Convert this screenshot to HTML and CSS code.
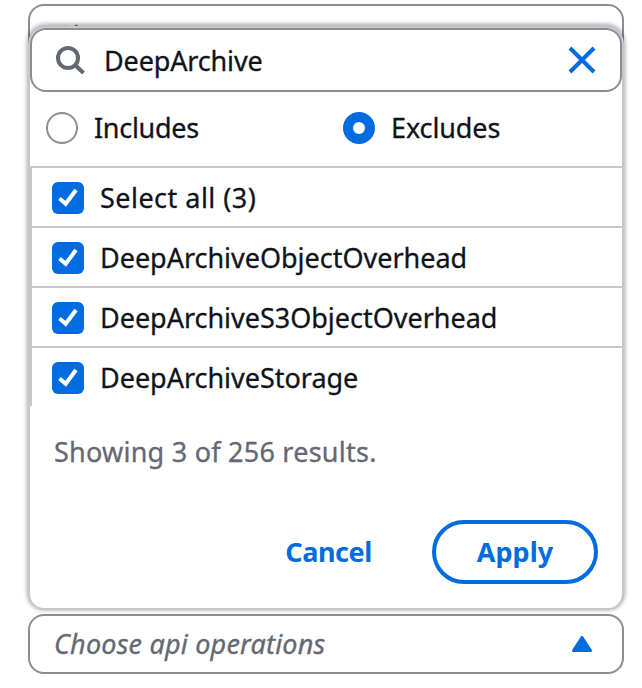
FILE: index.html
```html
<!DOCTYPE html>
<html lang="en">
<head>
<meta charset="utf-8">
<title>Usage type filter</title>
<link rel="stylesheet" href="styles.css">
</head>
<body>
<main class="filters">
  <section class="filter filter-open">
    <div class="field field-covered"><span class="placeholder">Choose usage types</span></div>
    <div class="dropdown">
      <div class="search">
        <svg class="search-icon" width="32" height="32" viewBox="0 0 32 32"><circle cx="14" cy="14" r="10" fill="none" stroke="#656871" stroke-width="4"/><path d="M21 21l8.5 8" stroke="#656871" stroke-width="4" fill="none"/></svg>
        <span class="query">DeepArchive</span>
        <svg class="clear-icon" width="32" height="32" viewBox="0 0 32 32"><path d="M4 4l24 24M28 4L4 28" stroke="#006ce0" stroke-width="4" fill="none"/></svg>
      </div>
      <div class="modes">
        <div class="mode"><span class="radio"></span><span class="includes">Includes</span></div>
        <div class="mode"><span class="radio radio-on"></span><span class="excludes">Excludes</span></div>
      </div>
      <div class="options">
        <div class="option"><span class="check"><svg width="32" height="32" viewBox="0 0 32 32"><path d="M7.5 16.5l6.2 5.3L24 8" stroke="#fff" stroke-width="4" fill="none"/></svg></span><span class="all">Select all (3)</span></div>
        <div class="option"><span class="check"><svg width="32" height="32" viewBox="0 0 32 32"><path d="M7.5 16.5l6.2 5.3L24 8" stroke="#fff" stroke-width="4" fill="none"/></svg></span><span>DeepArchiveObjectOverhead</span></div>
        <div class="option"><span class="check"><svg width="32" height="32" viewBox="0 0 32 32"><path d="M7.5 16.5l6.2 5.3L24 8" stroke="#fff" stroke-width="4" fill="none"/></svg></span><span>DeepArchiveS3ObjectOverhead</span></div>
        <div class="option"><span class="check"><svg width="32" height="32" viewBox="0 0 32 32"><path d="M7.5 16.5l6.2 5.3L24 8" stroke="#fff" stroke-width="4" fill="none"/></svg></span><span>DeepArchiveStorage</span></div>
      </div>
      <div class="status">Showing 3 of 256 results.</div>
      <div class="actions">
        <span class="cancel">Cancel</span>
        <span class="apply">Apply</span>
      </div>
    </div>
  </section>
  <section class="filter">
    <div class="field"><span class="placeholder">Choose api operations</span>
      <svg class="caret" width="20" height="16" viewBox="0 0 20 16"><path d="M10 1.5L18.5 14.5H1.5Z" fill="#006ce0" stroke="#006ce0" stroke-width="3" stroke-linejoin="round"/></svg>
    </div>
  </section>
</main>
</body>
</html>
```

FILE: styles.css
```css
* { box-sizing: border-box; }
body { margin: 0; background: #fff; color: #0f141a; font: 27px/36px "Noto Sans", "Open Sans", sans-serif; -webkit-text-stroke: 0.3px currentColor; }
svg { display: block; flex: none; }
.filters { padding: 4px 18px 14px 28px; display: grid; gap: 10px; }
.filter-open { position: relative; height: 600px; }
.field { height: 60px; border: 2px solid #8c8c94; border-radius: 16px; padding: 0 30px 0 24px; display: flex; align-items: center; justify-content: space-between; white-space: nowrap; }
.field-covered { padding-top: 3px; }
.placeholder { color: #656871; font-style: italic; letter-spacing: 0.2px; }
.dropdown { position: absolute; top: 22px; left: 0; width: 596px; height: 584px; background: #fff; border: 2px solid #c6c6cd; border-radius: 18px 18px 16px 16px; box-shadow: 0 -1px 4px 1px rgba(0, 7, 22, .34); white-space: nowrap; }
.search { height: 64px; border: 2px solid #8c8c94; border-radius: 16px; padding: 0 22px; display: flex; align-items: center; }
.query { flex: 1; margin-left: 18px; padding-top: 2px; letter-spacing: -0.15px; }
.clear-icon { margin-bottom: 1px; }
.modes { height: 74px; padding: 0 0 2px 16px; display: grid; grid-template-columns: 297px 1fr; align-items: center; }
.mode { display: flex; align-items: center; gap: 16px; }
.includes { letter-spacing: -0.3px; }
.excludes { letter-spacing: -0.1px; }
.radio { width: 32px; height: 32px; border: 2px solid #8c8c94; border-radius: 50%; }
.radio-on { border: 10px solid #006ce0; }
.options { border-left: 2px solid #c6c6cd; }
.option { height: 60px; border-top: 2px solid #c6c6cd; padding: 2px 0 0 20px; display: flex; align-items: center; gap: 16px; letter-spacing: -0.02px; }
.all { letter-spacing: 0.47px; }
.check { width: 32px; height: 32px; border-radius: 6px; background: #006ce0; }
.status { padding: 28px 24px 0; color: #656871; letter-spacing: 0.24px; }
.actions { padding: 50px 24px 0 0; display: flex; justify-content: flex-end; align-items: center; gap: 60px; color: #006ce0; font-weight: 700; -webkit-text-stroke: 0; }
.cancel { letter-spacing: -0.4px; }
.apply { width: 166px; height: 64px; border: 4px solid #006ce0; border-radius: 32px; display: flex; align-items: center; justify-content: center; }
```
